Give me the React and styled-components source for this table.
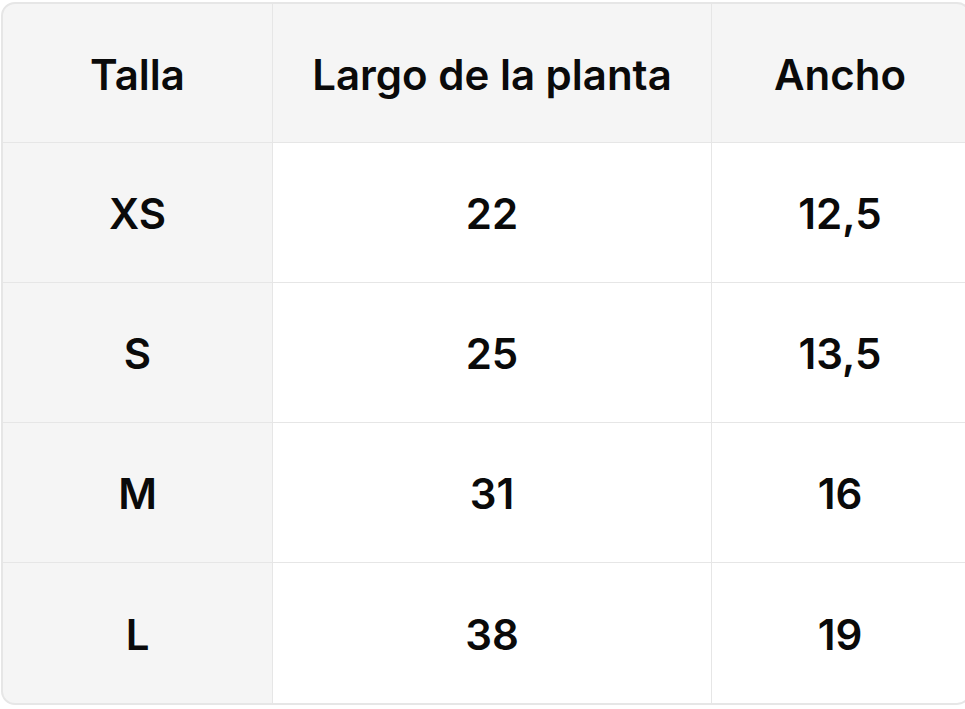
import React from 'react'
import styled, { createGlobalStyle } from 'styled-components'

const GlobalStyle = createGlobalStyle`
  html, body {
    margin: 0;
    padding: 0;
    background: #ffffff;
    overflow: hidden;
  }
`

const Page = styled.div`
  padding: 2px 0 0 1px;
  width: 965px;
  height: 709px;
  box-sizing: border-box;
  overflow: hidden;
`

const Table = styled.div`
  display: grid;
  grid-template-columns: 269px 438px 256px;
  grid-template-rows: 138px repeat(3, 139px) 140px;
  gap: 1px;
  width: 970px;
  box-sizing: border-box;
  border: 2px solid #e6e6e6;
  border-radius: 14px;
  background: #e6e6e6;
  overflow: hidden;
  font-family: Inter, "Liberation Sans", sans-serif;
`

const Cell = styled.div`
  display: flex;
  align-items: center;
  justify-content: center;
  background: ${props => props.shaded ? '#f5f5f5' : '#ffffff'};
  color: #0a0a0a;
  font-size: 42px;
  font-weight: 600;
  padding-top: 2px;
`

const header = ['Talla', 'Largo de la planta', 'Ancho']

const rows = [
  ['XS', '22', '12,5'],
  ['S', '25', '13,5'],
  ['M', '31', '16'],
  ['L', '38', '19']
]

export default function App() {
  return (
    <>
      <GlobalStyle />
      <Page>
        <Table>
          {header.map(h => (
            <Cell key={h} shaded>{h}</Cell>
          ))}
          {rows.map(row => row.map((value, i) => (
            <Cell key={row[0] + i} shaded={i === 0}>{value}</Cell>
          )))}
        </Table>
      </Page>
    </>
  )
}
